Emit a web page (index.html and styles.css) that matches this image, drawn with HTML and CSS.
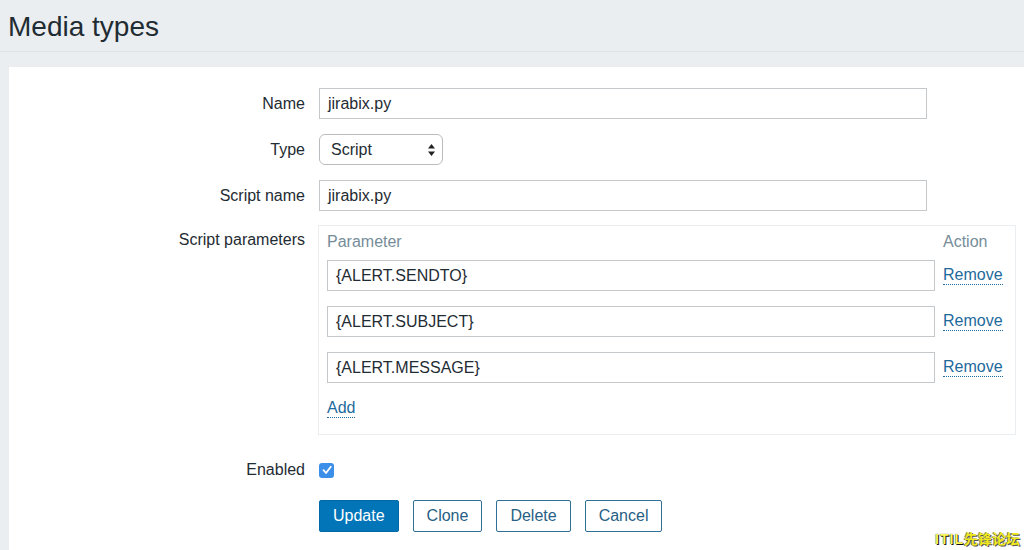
FILE: index.html
```html
<!DOCTYPE html>
<html>
<head>
<meta charset="utf-8">
<link rel="stylesheet" href="styles.css">
</head>
<body>
<header class="page-header">
  <h1 class="title">Media types</h1>
</header>
<main class="panel">
  <div class="form-row">
    <label class="form-label">Name</label>
    <div class="form-field"><div class="input input-wide">jirabix.py</div></div>
  </div>
  <div class="form-row">
    <label class="form-label">Type</label>
    <div class="form-field">
      <div class="select">
        <span>Script</span>
        <svg class="select-arrows" width="9" height="14" viewBox="0 0 9 14"><path d="M4.5 1 L8 5.5 H1 Z M4.5 13 L8 8.5 H1 Z" fill="#222"/></svg>
      </div>
    </div>
  </div>
  <div class="form-row">
    <label class="form-label">Script name</label>
    <div class="form-field"><div class="input input-wide">jirabix.py</div></div>
  </div>
  <div class="form-row form-row-top">
    <label class="form-label label-top">Script parameters</label>
    <div class="form-field">
      <div class="params">
        <div class="params-head">Parameter</div>
        <div class="params-head">Action</div>
        <div class="input param-input">{ALERT.SENDTO}</div>
        <a class="link">Remove</a>
        <div class="input param-input">{ALERT.SUBJECT}</div>
        <a class="link">Remove</a>
        <div class="input param-input">{ALERT.MESSAGE}</div>
        <a class="link">Remove</a>
        <a class="link add-link">Add</a>
      </div>
    </div>
  </div>
  <div class="form-row enabled-row">
    <label class="form-label">Enabled</label>
    <div class="form-field">
      <span class="checkbox">
        <svg width="14" height="14" viewBox="0 0 14 14"><path d="M3.5 7.2 L6 10 L10.8 3.8" fill="none" stroke="#fff" stroke-width="1.8" stroke-linecap="round" stroke-linejoin="round"/></svg>
      </span>
    </div>
  </div>
  <div class="form-row buttons-row">
    <div class="form-label"></div>
    <div class="form-field buttons">
      <button class="btn btn-primary">Update</button>
      <button class="btn">Clone</button>
      <button class="btn">Delete</button>
      <button class="btn">Cancel</button>
    </div>
  </div>
</main>
<div class="watermark"><span class="wm-latin">ITIL</span>先锋论坛</div>
</body>
</html>
```

FILE: styles.css
```css
html, body {
  margin: 0;
  padding: 0;
  height: 100%;
  overflow: hidden;
}
body {
  background: #ebeef0;
  font-family: "Liberation Sans", Arial, sans-serif;
  color: #1f2c33;
  font-size: 16px;
  position: relative;
  display: flex;
  flex-direction: column;
}
.page-header {
  height: 52px;
  flex: none;
  box-sizing: border-box;
  border-bottom: 1px solid #dde2e5;
  padding: 0 8px;
  display: flex;
  align-items: center;
}
.title {
  margin: 0;
  font-weight: normal;
  font-size: 28px;
  color: #1f2c33;
  position: relative;
  top: 1px;
}
.panel {
  margin: 15px 0 0 9px;
  background: #fff;
  padding: 21px 0 0 0;
  flex: 1;
  min-height: 0;
  box-sizing: border-box;
}
.form-row {
  display: flex;
  align-items: center;
  margin-bottom: 15px;
}
.form-row-top {
  align-items: flex-start;
  margin-top: -1px;
}
.form-label {
  width: 296px;
  flex: none;
  text-align: right;
  color: #1f2c33;
  padding-right: 14px;
  box-sizing: content-box;
}
.label-top {
  padding-top: 6px;
}
.form-field {
  display: flex;
  align-items: center;
}
.input {
  height: 31px;
  box-sizing: border-box;
  border: 1px solid #c5c8ca;
  background: #fff;
  padding: 0 8px;
  display: flex;
  align-items: center;
  color: #1f2c33;
}
.input-wide {
  width: 608px;
}
.select {
  width: 124px;
  height: 31px;
  box-sizing: border-box;
  border: 1px solid #b9bcbe;
  border-radius: 6px;
  background: #fff;
  display: flex;
  align-items: center;
  justify-content: space-between;
  padding: 0 6px 0 11px;
}
.select-arrows {
  display: block;
}
.params {
  width: 698px;
  box-sizing: border-box;
  border: 1px solid #ebeef0;
  margin-left: -1px;
  padding: 6px 14px 14px 8px;
  display: grid;
  grid-template-columns: 608px auto;
  column-gap: 8px;
  row-gap: 15px;
  align-items: center;
}
.params-head {
  color: #768d99;
  height: 20px;
  line-height: 20px;
  margin-bottom: -7px;
}
.param-input {
  width: 608px;
}
.link {
  color: #1e6a9c;
  text-decoration: none;
  border-bottom: 1px dotted #1e6a9c;
  justify-self: start;
  line-height: 18px;
  cursor: pointer;
}
.add-link {
  grid-column: 1;
  margin-top: 1px;
  margin-bottom: 2px;
}
.enabled-row {
  margin-top: 26px;
  margin-bottom: 21px;
}
.checkbox {
  width: 15px;
  height: 15px;
  border-radius: 3px;
  background: #3c8fe8;
  display: flex;
  align-items: center;
  justify-content: center;
}
.checkbox svg {
  display: block;
}
.buttons {
  gap: 14px;
}
.btn {
  height: 32px;
  padding: 0 13px;
  font-family: inherit;
  font-size: 16px;
  background: #fff;
  color: #285f85;
  border: 1px solid #2f6f98;
  border-radius: 2px;
  cursor: pointer;
}
.btn-primary {
  background: #0275b8;
  border-color: #0269a6;
  color: #fff;
  padding: 0 13px;
}
.watermark {
  position: absolute;
  right: 4px;
  bottom: 3px;
  font-family: "Noto Sans CJK SC", sans-serif;
  font-size: 14px;
  font-weight: bold;
  color: #f2ea1a;
  text-shadow: 1px 1px 0 #555, -1px 0 0 #777;
  line-height: 16px;
}
.wm-latin {
  font-family: "Liberation Sans", Arial, sans-serif;
  color: #fdf65a;
  text-shadow: 1px 1px 0 #111, 0 0 1px #111;
  letter-spacing: 1px;
}
```
